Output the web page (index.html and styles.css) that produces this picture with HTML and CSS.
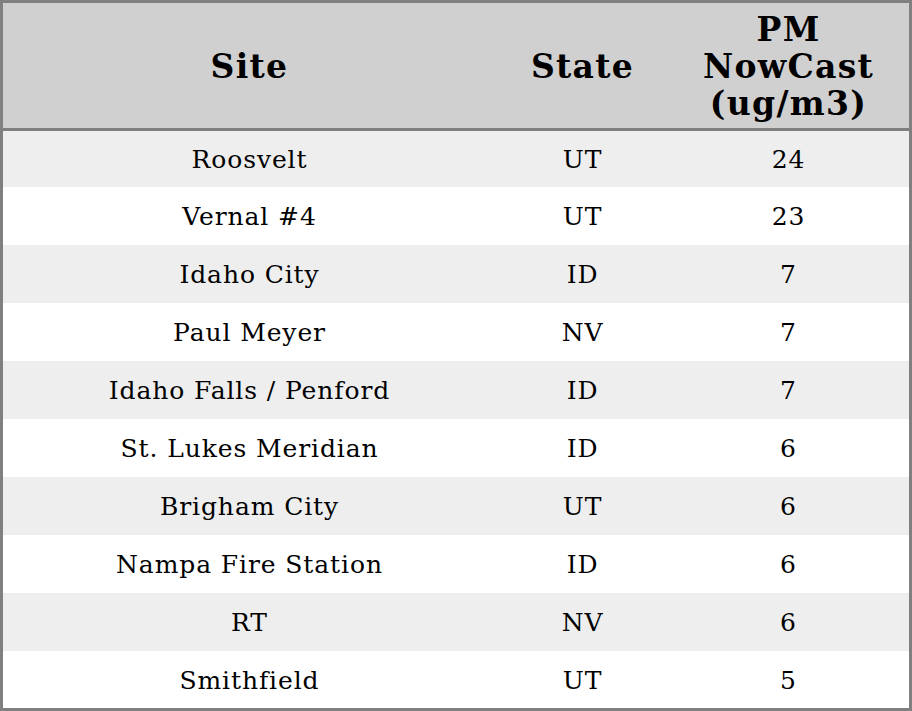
FILE: index.html
```html
<!DOCTYPE html>
<html>
<head>
<meta charset="utf-8">
<link rel="stylesheet" href="styles.css">
</head>
<body>
<table class="aq">
  <colgroup>
    <col class="c-site">
    <col class="c-state">
    <col class="c-pm">
  </colgroup>
  <thead>
    <tr>
      <th>Site</th>
      <th>State</th>
      <th>PM<br>NowCast<br>(ug/m3)</th>
    </tr>
  </thead>
  <tbody>
    <tr><td>Roosvelt</td><td>UT</td><td>24</td></tr>
    <tr><td>Vernal #4</td><td>UT</td><td>23</td></tr>
    <tr><td>Idaho City</td><td>ID</td><td>7</td></tr>
    <tr><td>Paul Meyer</td><td>NV</td><td>7</td></tr>
    <tr><td>Idaho Falls / Penford</td><td>ID</td><td>7</td></tr>
    <tr><td>St. Lukes Meridian</td><td>ID</td><td>6</td></tr>
    <tr><td>Brigham City</td><td>UT</td><td>6</td></tr>
    <tr><td>Nampa Fire Station</td><td>ID</td><td>6</td></tr>
    <tr><td>RT</td><td>NV</td><td>6</td></tr>
    <tr><td>Smithfield</td><td>UT</td><td>5</td></tr>
  </tbody>
</table>
</body>
</html>
```
FILE: styles.css
```css
html, body {
  margin: 0;
  padding: 0;
  background: #ffffff;
}

.aq {
  width: 912px;
  border-collapse: separate;
  border-spacing: 0;
  border: 3px solid #808080;
  table-layout: fixed;
  font-family: "DejaVu Serif", serif;
  color: #000;
}

.c-site { width: 494px; }
.c-state { width: 172px; }
.c-pm { width: 240px; }

.aq th {
  background: #d0d0d0;
  font-size: 33px;
  font-weight: bold;
  letter-spacing: 1.3px;
  line-height: 37px;
  height: 128px;
  padding: 2px 1px 0 0;
  text-align: center;
  vertical-align: middle;
  border-bottom: 3px solid #808080;
  box-sizing: border-box;
}

.aq td {
  font-size: 25px;
  letter-spacing: 0.9px;
  line-height: 28px;
  height: 58px;
  padding: 2px 1px 0 0;
  text-align: center;
  vertical-align: middle;
  box-sizing: border-box;
}

.aq tbody tr:nth-child(odd) td { background: #eeeeee; }
.aq tbody tr:nth-child(even) td { background: #ffffff; }

.aq tbody tr:first-child td { height: 56px; }
.aq tbody tr:last-child td { height: 57px; }
```
